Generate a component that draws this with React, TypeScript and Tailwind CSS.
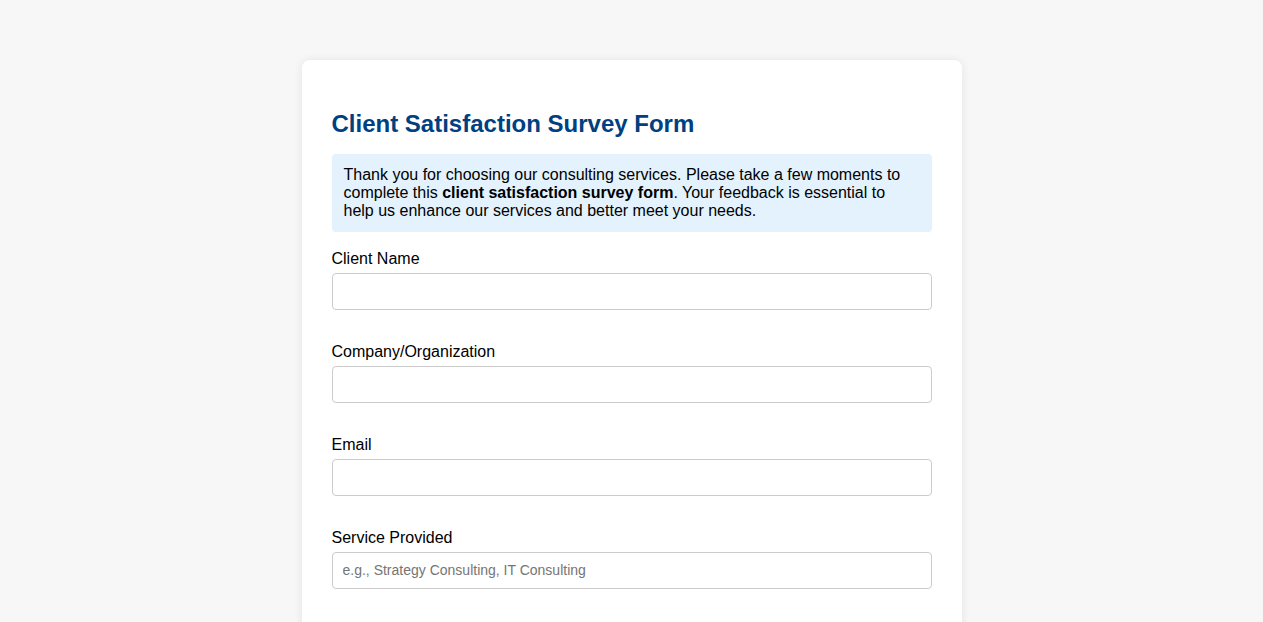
import React from "react";

const fields = [
  { label: "Client Name", placeholder: "" },
  { label: "Company/Organization", placeholder: "" },
  { label: "Email", placeholder: "" },
  { label: "Service Provided", placeholder: "e.g., Strategy Consulting, IT Consulting" },
  { label: "Project Duration", placeholder: "e.g., 3 months" },
];

export default function App() {
  return (
    <div className="min-h-screen bg-[#f7f7f7] pt-[60px] pb-10 font-['Liberation_Sans',Arial,sans-serif] text-black">
      <div className="mx-auto w-[660px] rounded-lg bg-white px-[30px] pt-[50px] pb-[30px] shadow-[0_0_10px_rgba(0,0,0,0.08)]">
        <h2 className="text-[24px] leading-[27px] font-bold text-[#004080]">Client Satisfaction Survey Form</h2>

        <div className="mt-[17px] rounded bg-[#e3f2fd] px-3 py-[11.5px] text-[16px] leading-[18.4px]">
          Thank you for choosing our consulting services. Please take a few moments to complete this{" "}
          <strong>client satisfaction survey form</strong>. Your feedback is essential to help us enhance our
          services and better meet your needs.
        </div>

        <form className="mt-[18px] flex flex-col gap-[33.6px]">
          {fields.map((f) => (
            <div key={f.label} className="flex flex-col">
              <label className="text-[16px] leading-[18.4px]">{f.label}</label>
              <input
                type="text"
                placeholder={f.placeholder}
                className="mt-[4px] h-[37px] w-full rounded border border-[#ccc] bg-white px-[10px] text-[14px] placeholder:text-[#757575] outline-none"
              />
            </div>
          ))}
        </form>
      </div>
    </div>
  );
}
